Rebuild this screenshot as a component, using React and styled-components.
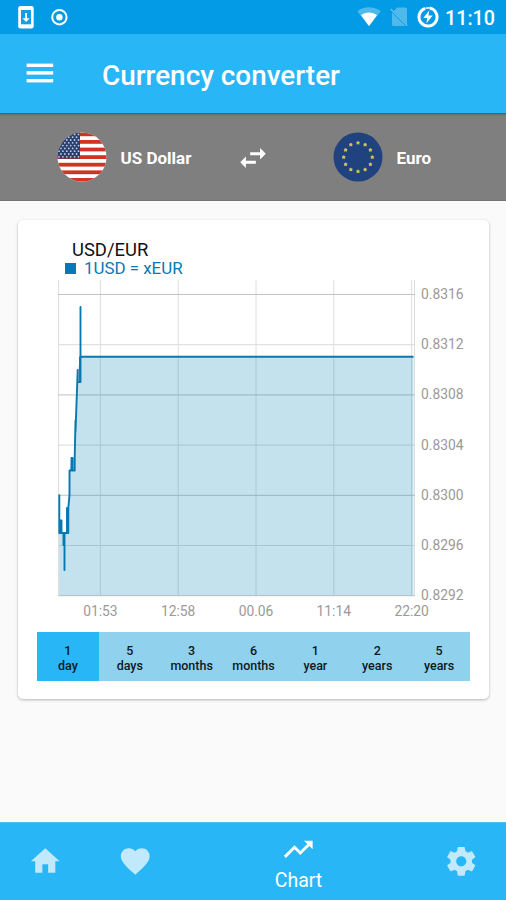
import React from "react";
import styled, { createGlobalStyle } from "styled-components";

const GlobalStyle = createGlobalStyle`
  * { box-sizing: border-box; }
  body { margin: 0; background: #fafafa; font-family: Roboto, "Liberation Sans", sans-serif; }
  svg { display: block; flex: none; }
`;

const Screen = styled.div`
  width: 506px;
  height: 900px;
  display: flex;
  flex-direction: column;
  overflow: hidden;
  background: #fafafa;
`;

const StatusBar = styled.header`
  height: 34px;
  flex: none;
  display: flex;
  align-items: center;
  justify-content: space-between;
  padding: 0 11px 0 17px;
  background: #039be5;
  color: #fff;
`;

const StatusGroup = styled.div`
  display: flex;
  align-items: center;
  gap: ${(p) => p.$gap}px;
`;

const Clock = styled.span`
  font-size: 19.7px;
  font-weight: 500;
  line-height: 34px;
  padding-top: 3px;
  margin-left: -3px;
  white-space: nowrap;
`;

const AppBar = styled.div`
  height: 79px;
  flex: none;
  display: flex;
  align-items: center;
  gap: 44px;
  padding-left: 22px;
  background: #29b6f6;
`;

const Title = styled.h1`
  margin: 0;
  padding-top: 5px;
  font-size: 27.9px;
  font-weight: 500;
  line-height: 34px;
  color: #fff;
  white-space: nowrap;
`;

const CurrencyBar = styled.div`
  height: 88px;
  flex: none;
  display: grid;
  grid-template-columns: 179px 34px 1fr;
  align-items: center;
  padding-left: 57px;
  background: #7f7f7f;
  border-bottom: 1px solid #747474;
  box-shadow: inset 0 4px 3px -3px rgba(0, 0, 0, 0.4);
`;

const Currency = styled.div`
  display: flex;
  align-items: center;
  gap: 13.5px;
  padding-left: ${(p) => p.$indent || 0}px;
`;

const CurrencyName = styled.span`
  font-size: 17px;
  font-weight: 700;
  line-height: 22px;
  padding-top: 2px;
  color: #fff;
  white-space: nowrap;
`;

const SwapButton = styled.span`
  display: flex;
  padding-top: 2px;
  color: #fff;
`;

const Content = styled.main`
  flex: 1;
  padding: 19px 17px 0 18px;
`;

const Card = styled.section`
  height: 479px;
  padding: 20px 19px 18px;
  border-radius: 5px;
  background: #fff;
  box-shadow: 0 1px 3px rgba(0, 0, 0, 0.28);
  display: flex;
  flex-direction: column;
`;

const ChartTitle = styled.h2`
  margin: 0;
  padding-left: 35px;
  font-size: 18.4px;
  font-weight: 400;
  line-height: 20px;
  height: 19px;
  color: #111;
`;

const Legend = styled.div`
  display: flex;
  align-items: center;
  gap: 8px;
  height: 18px;
  padding-left: 28px;
  font-size: 16.9px;
  line-height: 18px;
  color: #0878b7;
`;

const LegendMark = styled.span`
  width: 11px;
  height: 11px;
  background: #0878b7;
`;

const Chart = styled.svg`
  overflow: visible;
`;

const AxisText = styled.text`
  font-family: Roboto, "Liberation Sans", sans-serif;
  font-size: 13.8px;
  fill: #999;
`;

const Periods = styled.div`
  height: 49px;
  margin-top: auto;
  display: grid;
  grid-template-columns: repeat(7, 1fr);
  background: #90d1ee;
`;

const Period = styled.button`
  display: flex;
  flex-direction: column;
  align-items: center;
  justify-content: center;
  padding: 2px 0 0;
  border: 0;
  background: ${(p) => (p.$active ? "#29b6f6" : "transparent")};
  font-family: Roboto, "Liberation Sans", sans-serif;
  font-size: 12.5px;
  font-weight: 500;
  line-height: 15px;
  color: #0b1a21;
`;

const BottomNav = styled.nav`
  height: 78px;
  flex: none;
  display: grid;
  grid-template-columns: 90px 91px 235px 90px;
  background: #29b6f6;
  border-top: 1px solid #55bdec;
`;

const NavItem = styled.a`
  display: flex;
  flex-direction: column;
  align-items: center;
  padding-top: ${(p) => (p.$active ? 9 : 21)}px;
  color: ${(p) => (p.$active ? "#fff" : "#c0e9fc")};
`;

const NavLabel = styled.span`
  font-size: 19.5px;
  line-height: 24px;
  margin-top: 2px;
`;

const MaterialIcon = ({ d, size = 34.5 }) => (
  <svg width={size} height={size} viewBox="0 0 24 24" fill="currentColor">
    <path d={d} />
  </svg>
);

const paths = {
  home: "M10 20v-6h4v6h5v-8h3L12 3 2 12h3v8z",
  heart:
    "M12 21.35l-1.45-1.32C5.4 15.36 2 12.28 2 8.5 2 5.42 4.42 3 7.5 3c1.74 0 3.41.81 4.5 2.09C13.09 3.81 14.76 3 16.5 3 19.58 3 22 5.42 22 8.5c0 3.78-3.4 6.86-8.55 11.54L12 21.35z",
  trend: "M16 6l2.29 2.29-4.88 4.88-4-4L2 16.59 3.41 18l6-6 4 4 6.3-6.29L22 12V6z",
  gear:
    "M19.43 12.98c.04-.32.07-.64.07-.98s-.03-.66-.07-.98l2.11-1.65c.19-.15.24-.42.12-.64l-2-3.46c-.12-.22-.39-.3-.61-.22l-2.49 1c-.52-.4-1.08-.73-1.69-.98l-.38-2.65C14.46 2.18 14.25 2 14 2h-4c-.25 0-.46.18-.49.42l-.38 2.65c-.61.25-1.17.59-1.69.98l-2.49-1c-.23-.09-.49 0-.61.22l-2 3.46c-.13.22-.07.49.12.64l2.11 1.65c-.04.32-.07.65-.07.98s.03.66.07.98l-2.11 1.65c-.19.15-.24.42-.12.64l2 3.46c.12.22.39.3.61.22l2.49-1c.52.4 1.08.73 1.69.98l.38 2.65c.03.24.24.42.49.42h4c.25 0 .46-.18.49-.42l.38-2.65c.61-.25 1.17-.59 1.69-.98l2.49 1c.23.09.49 0 .61-.22l2-3.46c.12-.22.07-.49-.12-.64l-2.11-1.65zM12 15.5c-1.93 0-3.5-1.57-3.5-3.5s1.57-3.5 3.5-3.5 3.5 1.57 3.5 3.5-1.57 3.5-3.5 3.5z",
  swap: "M6.99 11L3 15l3.99 4v-3H14v-2H6.99v-3zM21 9l-3.99-4v3H10v2h7.01v3L21 9z",
};

const PhoneIcon = () => (
  <svg width="18" height="24" viewBox="0 0 18 24">
    <rect x="1.200" y="1" width="15.500" height="22.500" rx="2.300" fill="#fff" />
    <rect x="4" y="5" width="10" height="14.300" fill="#159ee4" />
    <path d="M8.200 8h1.800v5.200h2.700L9.100 17l-3.600-3.800h2.700z" fill="#fff" />
  </svg>
);

const RecordIcon = () => (
  <svg width="18" height="18" viewBox="0 0 18 18">
    <circle cx="9.400" cy="9.200" r="7.200" fill="none" stroke="#fff" strokeWidth="2" />
    <circle cx="9.400" cy="9.200" r="3.200" fill="#fff" />
  </svg>
);

const WifiIcon = () => (
  <svg width="24" height="20" viewBox="0 0 24 20">
    <path d="M0.3 4.200C7-1 17-1 23.700 4.200L12 19.300z" fill="#4fb9ec" />
    <path d="M4 8.200c4.800-3.700 11.200-3.700 16 0L12 19z" fill="#fff" />
  </svg>
);

const NoSimIcon = () => (
  <svg width="18" height="20" viewBox="0 0 18 20">
    <path d="M7 .5h8.500Q17 .5 17 2v15.500L3.800 4z" fill="#4fb9ec" />
    <path d="M2 5.500L15.500 19H3.500Q2 19 2 17.500z" fill="#4fb9ec" />
    <path d="M.7 2L17.300 18.700" stroke="#66c2ee" strokeWidth="1.300" />
  </svg>
);

const BatteryIcon = () => (
  <svg width="22" height="22" viewBox="0 0 22 22">
    <path d="M12.500 2.100A9 9 0 1 1 8 2.500" fill="none" stroke="#fff" strokeWidth="3" />
    <path d="M8.500 2.300l4-.5" stroke="#fff" strokeWidth="1.500" />
    <path d="M12.300 4.500L6.300 12h4L9.300 17.500l6.400-8h-4.200z" fill="#fff" />
  </svg>
);

const MenuIcon = () => (
  <svg width="36" height="36" viewBox="0 0 36 36" fill="#fff">
    {[7.6, 15.2, 23].map((y) => (
      <rect key={y} x="4.600" y={y} width="26.600" height="3.400" />
    ))}
  </svg>
);

const UsFlag = () => (
  <svg width="50" height="50" viewBox="0 0 50 50">
    <defs>
      <clipPath id="us-disc">
        <circle cx="25" cy="25" r="24.500" />
      </clipPath>
    </defs>
    <g clipPath="url(#us-disc)">
      <rect width="50" height="50" fill="#fff" />
      {[0, 1, 2, 3, 4, 5, 6].map((i) => (
        <rect key={i} y={0.4 + i * 7.6} width="50" height="3.800" fill="#cf3527" />
      ))}
      <rect width="23" height="26.500" fill="#283f70" />
      {Array.from({ length: 9 }, (_, row) =>
        Array.from({ length: row % 2 ? 5 : 6 }, (_, col) => (
          <circle
            key={`${row}-${col}`}
            cx={2 + col * 3.9 + (row % 2 ? 1.95 : 0)}
            cy={2.4 + row * 2.8}
            r="0.900"
            fill="#c5cddd"
          />
        ))
      )}
    </g>
  </svg>
);

const EuFlag = () => (
  <svg width="50" height="50" viewBox="0 0 50 50">
    <circle cx="25" cy="25" r="24.500" fill="#20427f" />
    {Array.from({ length: 12 }, (_, i) => {
      const a = (i * Math.PI) / 6;
      const x = 25 + 14.3 * Math.sin(a);
      const y = 25.2 - 14.3 * Math.cos(a);
      return (
        <path
          key={i}
          transform={`translate(${x} ${y})`}
          d="M0-2L.9-1.200 1.900-.8 1.300.3 1.500 1.700 0 1.300-1.500 1.700-1.300.3-1.900-.8-.9-1.200z"
          fill="#d3c455"
        />
      );
    })}
  </svg>
);

const rates = ["0.8316", "0.8312", "0.8308", "0.8304", "0.8300", "0.8296", "0.8292"];
const times = ["01:53", "12:58", "00.06", "11:14", "22:20"];
const rateY = (i) => 17.5 + i * 50.2;
const timeX = (i) => 63.4 + i * 77.8;
const series =
  "M22.300 217.500V256H23.500V243.500H24.500V256H26.500V268H27.500V293V256H30V231H31.300V256V231L32.500 218V193.500H34.500V181H35.500V193.500H37.700V181L38.500 143.500V155L40.700 93V105H43V80V105H43.500V30V79.800H376.500";
const area =
  "M22.300 217.500V256H27.500V293V256H30V231H31.300L32.500 193.500L34.500 181H37.700L38.500 143.500L40.700 93L43.500 79.800H376.500V318.500H22z";

const RateChart = () => (
  <Chart width="433" height="345" viewBox="0 0 433 345">
    <g stroke="#dedede" strokeWidth="1">
      {times.map((t, i) => (
        <path key={t} d={`M${timeX(i)} 3V318.500`} />
      ))}
      <path d="M21.500 3V318.500M377.500 3V318.500" />
    </g>
    <g strokeWidth="1">
      {rates.map((r, i) => (
        <path key={r} d={`M21 ${rateY(i)}H378`} stroke={i % 2 ? "#dadada" : "#c3c3c3"} />
      ))}
    </g>
    <path d={area} fill="#0a83b7" fillOpacity="0.240" />
    <path d={series} fill="none" stroke="#0878b0" strokeWidth="1.900" strokeLinejoin="round" />
    {rates.map((r, i) => (
      <AxisText key={r} x="384" y={rateY(i) + 4.5}>
        {r}
      </AxisText>
    ))}
    {times.map((t, i) => (
      <AxisText key={t} x={timeX(i)} y="338.500" textAnchor="middle">
        {t}
      </AxisText>
    ))}
  </Chart>
);

const periods = [
  ["1", "day"],
  ["5", "days"],
  ["3", "months"],
  ["6", "months"],
  ["1", "year"],
  ["2", "years"],
  ["5", "years"],
];

export default function App() {
  return (
    <Screen>
      <GlobalStyle />
      <StatusBar>
        <StatusGroup $gap={15}>
          <PhoneIcon />
          <RecordIcon />
        </StatusGroup>
        <StatusGroup $gap={9}>
          <WifiIcon />
          <NoSimIcon />
          <BatteryIcon />
          <Clock>11:10</Clock>
        </StatusGroup>
      </StatusBar>
      <AppBar>
        <MenuIcon />
        <Title>Currency converter</Title>
      </AppBar>
      <CurrencyBar>
        <Currency>
          <UsFlag />
          <CurrencyName>US Dollar</CurrencyName>
        </Currency>
        <SwapButton>
          <MaterialIcon d={paths.swap} size={34} />
        </SwapButton>
        <Currency $indent={63}>
          <EuFlag />
          <CurrencyName>Euro</CurrencyName>
        </Currency>
      </CurrencyBar>
      <Content>
        <Card>
          <ChartTitle>USD/EUR</ChartTitle>
          <Legend>
            <LegendMark />
            1USD = xEUR
          </Legend>
          <RateChart />
          <Periods>
            {periods.map(([n, unit], i) => (
              <Period key={n + unit} $active={i === 0}>
                <span>{n}</span>
                <span>{unit}</span>
              </Period>
            ))}
          </Periods>
        </Card>
      </Content>
      <BottomNav>
        <NavItem>
          <MaterialIcon d={paths.home} />
        </NavItem>
        <NavItem>
          <MaterialIcon d={paths.heart} />
        </NavItem>
        <NavItem $active>
          <MaterialIcon d={paths.trend} />
          <NavLabel>Chart</NavLabel>
        </NavItem>
        <NavItem>
          <MaterialIcon d={paths.gear} />
        </NavItem>
      </BottomNav>
    </Screen>
  );
}
